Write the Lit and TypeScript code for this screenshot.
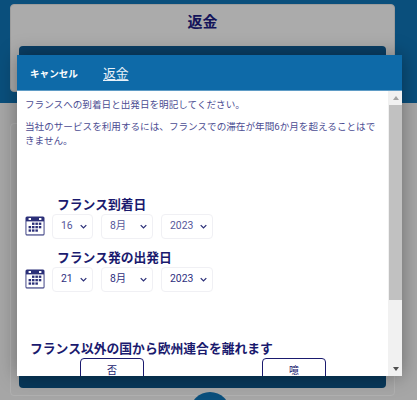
import { LitElement, html, css, svg } from "lit";
import { customElement } from "lit/decorators.js";

const calendar = svg`<svg class="cal" viewBox="0 0 20 20" width="20" height="20">
  <path d="M2 .5h16a1.5 1.5 0 0 1 1.5 1.5v16a1.5 1.5 0 0 1-1.5 1.5H2A1.5 1.5 0 0 1 .5 18V2A1.5 1.5 0 0 1 2 .5z" fill="#2b2f78"/>
  <rect x="1.4" y="5.4" width="17.2" height="13" fill="#fff"/>
  <rect x="3.6" y="2" width="2.4" height="2" fill="#fff"/><rect x="14" y="2" width="2.4" height="2" fill="#fff"/>
  <g fill="#2b2f78">
    <rect x="7" y="6.6" width="2.5" height="2.3"/><rect x="10.4" y="6.6" width="2.5" height="2.3"/><rect x="13.8" y="6.6" width="2.5" height="2.3"/>
    <rect x="3.6" y="10" width="2.5" height="2.3"/><rect x="7" y="10" width="2.5" height="2.3"/><rect x="10.4" y="10" width="2.5" height="2.3"/><rect x="13.8" y="10" width="2.5" height="2.3"/>
    <rect x="3.6" y="13.4" width="2.5" height="2.3"/><rect x="7" y="13.4" width="2.5" height="2.3"/><rect x="10.4" y="13.4" width="2.5" height="2.3"/>
  </g>
</svg>`;

const chev = svg`<svg class="chev" viewBox="0 0 10 6" width="7" height="5"><path d="M1 1l4 4 4-4" fill="none" stroke="#2b2f78" stroke-width="1.8"/></svg>`;

@customElement("app-root")
export class AppRoot extends LitElement {
  static styles = css`
    :host { display: block; width: 417px; height: 400px; overflow: hidden; position: relative;
      font-family: Roboto, "Noto Sans CJK JP", sans-serif;
      background: linear-gradient(#0a4f7c 103px, #a6a6a6 103px); }
    .stage { height: 400px; box-sizing: border-box; overflow: hidden; display: flex; flex-direction: column; padding: 4px 22px 0 10px; }
    .top { flex: none; height: 88px; background: #ababab; border-radius: 4px; border: 1px solid #9c9c9c; box-sizing: border-box; padding: 0 8px; }
    .top h1 { margin: 0; padding-top: 4px; height: 41px; box-sizing: border-box; text-align: center; font-size: 15px; line-height: 26px; font-weight: 700; color: #14145a; }
    .inner { height: 45px; background: #0a3f66; border-radius: 4px 4px 0 0; }
    .lower { flex: none; margin-top: 31px; height: 273px; border: 1px solid #b0b0b0; border-radius: 4px; box-sizing: border-box; padding: 0 8px; display: flex; flex-direction: column; justify-content: flex-end; }
    .foot { height: 14px; background: #08385a; border-radius: 0 0 4px 4px; margin-bottom: 7px; }
    .circle { flex: none; margin: -4px 0 0 180px; width: 40px; height: 40px; border-radius: 50%; background: #0a4f7c; }
    .modal { position: absolute; left: 17px; top: 55px; width: 385px; height: 321px; background: #fff; display: flex; flex-direction: column; box-shadow: 0 0 18px rgba(0,0,0,.35); }
    .head { height: 36px; flex: none; background: #0e6aa8; display: flex; align-items: center; border-bottom: 1px solid #5f9cc6; box-sizing: border-box; padding-left: 13px; color: #fff; }
    .cancel { font-size: 9.6px; font-weight: 700; width: 73px; }
    .title { font-size: 12.8px; text-decoration: underline; text-underline-offset: 2px; color: #e8f1f8; }
    .body { flex: 1; min-height: 0; display: flex; }
    .content { flex: 1; min-width: 0; overflow: hidden; padding: 7px 7px 0 8px; box-sizing: border-box; color: #4b4c92; font-size: 9.6px; line-height: 14.4px; }
    .content p { margin: 0 0 7.6px; }
    .content p + p { margin-bottom: 0; }
    .first { margin-top: 47px; }
    .second { margin-top: 10px; }
    .label { font-size: 12.8px; font-weight: 700; line-height: 18px; color: #1a1a6e; padding-left: 32px; }
    .row { display: flex; align-items: center; }
    .cal { flex: none; width: 20px; height: 20px; margin-right: 7px; }
    .sel { box-sizing: border-box; height: 25px; display: flex; align-items: center; justify-content: space-between; border: 1px solid #f0f0f4; border-radius: 4px; padding: 0 5px 0 8px; font-size: 10.4px; background: #fff; margin-right: 8px; }
    .first .sel { color: #56579a; }
    .second .sel { color: #2f3080; }
    .d { width: 41px; } .m { width: 52px; } .y { width: 52px; margin-right: 0; }
    .leave { margin: 48px 0 0 5px; font-size: 12.8px; font-weight: 700; line-height: 18px; color: #1a1a6e; white-space: nowrap; }
    .btns { display: flex; justify-content: space-between; padding: 0 55px; }
    .btn { box-sizing: border-box; width: 64px; height: 30px; border: 1px solid #1a1a6e; border-radius: 4px; text-align: center; font-size: 10px; line-height: 24px; color: #1a1a6e; background: #fff; }
    .bar { flex: none; width: 14px; background: #f1f1f1; display: flex; flex-direction: column; align-items: center; box-sizing: border-box; padding-left: 1px; }
    .arrow { flex: none; height: 14px; display: flex; align-items: center; justify-content: center; }
    .thumb { flex: none; width: 100%; height: 195px; background: #c1c1c1; }
    .rest { flex: 1; }
    .up, .down { width: 0; height: 0; border-left: 3.5px solid transparent; border-right: 3.5px solid transparent; }
    .up { border-bottom: 4px solid #a3a3a3; }
    .down { border-top: 4px solid #505050; }
  `;

  private field(cls: string, label: string, day: string) {
    return html`<div class="field ${cls}">
      <div class="label">${label}</div>
      <div class="row">${calendar}
        <div class="sel d"><span>${day}</span>${chev}</div>
        <div class="sel m"><span>8月</span>${chev}</div>
        <div class="sel y"><span>2023</span>${chev}</div>
      </div>
    </div>`;
  }

  render() {
    return html`
      <div class="stage">
        <div class="top"><h1>返金</h1><div class="inner"></div></div>
        <div class="lower"><div class="foot"></div></div>
        <div class="circle"></div>
      </div>
      <div class="modal">
        <div class="head"><div class="cancel">キャンセル</div><div class="title">返金</div></div>
        <div class="body">
          <div class="content">
            <p>フランスへの到着日と出発日を明記してください。</p>
            <p>当社のサービスを利用するには、フランスでの滞在が年間6か月を超えることはできません。</p>
            ${this.field("first", "フランス到着日", "16")}
            ${this.field("second", "フランス発の出発日", "21")}
            <div class="leave">フランス以外の国から欧州連合を離れます</div>
            <div class="btns"><div class="btn">否</div><div class="btn">噫</div></div>
          </div>
          <div class="bar">
            <div class="arrow"><div class="up"></div></div>
            <div class="thumb"></div>
            <div class="rest"></div>
            <div class="arrow"><div class="down"></div></div>
          </div>
        </div>
      </div>`;
  }
}
